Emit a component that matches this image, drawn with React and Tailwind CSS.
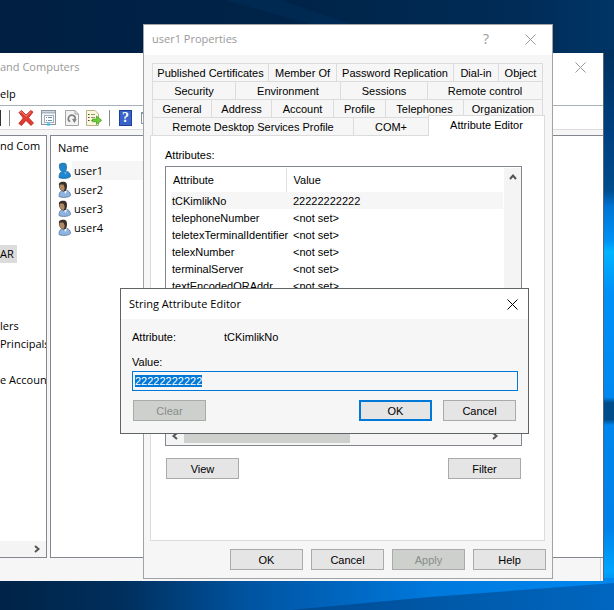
import { useEffect, useRef } from 'react';
import clsx from 'clsx';

const treeRows = ['nd Com', '', '', '', '', '', 'AR', '', '', '', 'lers', 'Principals', '', 'e Accoun'];
const users = ['user1', 'user2', 'user3', 'user4'];

const tabRows = [
  [
    { label: 'Published Certificates', width: 'w-[116px]' },
    { label: 'Member Of', width: 'w-[68px]' },
    { label: 'Password Replication', width: 'w-[117px]' },
    { label: 'Dial-in', width: 'w-[45px]' },
    { label: 'Object', width: 'w-[45px]' },
  ],
  [
    { label: 'Security', width: 'w-[83px]' },
    { label: 'Environment', width: 'w-[105px]' },
    { label: 'Sessions', width: 'w-[87px]' },
    { label: 'Remote control', width: 'w-[116px]' },
  ],
  [
    { label: 'General', width: 'w-[59px]' },
    { label: 'Address', width: 'w-[60px]' },
    { label: 'Account', width: 'w-[62px]' },
    { label: 'Profile', width: 'w-[52px]' },
    { label: 'Telephones', width: 'w-[78px]' },
    { label: 'Organization', width: 'w-[80px]' },
  ],
  [
    { label: 'Remote Desktop Services Profile', width: 'w-[201px]' },
    { label: 'COM+', width: 'w-[75px]' },
    { label: 'Attribute Editor', width: 'w-[117px]', active: true },
  ],
];

const attributes = [
  ['tCKimlikNo', '22222222222'],
  ['telephoneNumber', '<not set>'],
  ['teletexTerminalIdentifier', '<not set>'],
  ['telexNumber', '<not set>'],
  ['terminalServer', '<not set>'],
  ['textEncodedORAddr', '<not set>'],
];

function Wallpaper() {
  return (
    <svg className="absolute inset-0 h-full w-full" viewBox="0 0 614 610" preserveAspectRatio="none" aria-hidden="true">
      <defs>
        <linearGradient id="sky" x1="0" x2="1" y1="0" y2="0">
          <stop offset="0" stopColor="#001f42" />
          <stop offset="0.5" stopColor="#002449" />
          <stop offset="0.85" stopColor="#002c57" />
          <stop offset="1" stopColor="#003566" />
        </linearGradient>
        <linearGradient id="side" x1="0" x2="0" y1="0" y2="1">
          <stop offset="0" stopColor="#00305e" />
          <stop offset="0.15" stopColor="#004080" />
          <stop offset="0.25" stopColor="#004c8c" />
          <stop offset="0.28" stopColor="#0074d4" />
          <stop offset="0.34" stopColor="#0090f4" />
          <stop offset="0.36" stopColor="#00b4ff" />
          <stop offset="0.43" stopColor="#0090f8" />
          <stop offset="0.62" stopColor="#0088f0" />
          <stop offset="0.63" stopColor="#004c8a" />
          <stop offset="0.66" stopColor="#004c8a" />
          <stop offset="0.67" stopColor="#0086ee" />
          <stop offset="0.85" stopColor="#0080e8" />
          <stop offset="0.93" stopColor="#00a4ff" />
          <stop offset="1" stopColor="#0062b8" />
        </linearGradient>
        <linearGradient id="floor" x1="0" x2="1" y1="0" y2="0">
          <stop offset="0" stopColor="#002348" />
          <stop offset="0.2" stopColor="#002f5c" />
          <stop offset="0.4" stopColor="#0053a0" />
          <stop offset="0.7" stopColor="#0078dc" />
          <stop offset="1" stopColor="#0088f0" />
        </linearGradient>
        <linearGradient id="beam" x1="0" x2="1" y1="0" y2="0">
          <stop offset="0" stopColor="#004a92" />
          <stop offset="0.6" stopColor="#005cae" />
          <stop offset="1" stopColor="#0066c0" />
        </linearGradient>
      </defs>
      <rect width="614" height="610" fill="url(#sky)" />
      <path d="M225 0H280L350 24H310Z" fill="#003262" opacity="0.4" />
      <rect x="600" y="50" width="14" height="560" fill="url(#side)" />
      <rect y="578" width="614" height="32" fill="url(#floor)" />
      <path d="M290 610L430 597L614 583V610Z" fill="url(#beam)" />
    </svg>
  );
}

function CloseIcon() {
  return (
    <svg width="11" height="11" viewBox="0 0 11 11" fill="none" stroke="currentColor" aria-hidden="true">
      <path d="M0.5 0.5L10.5 10.5M10.5 0.5L0.5 10.5" />
    </svg>
  );
}

function Chevron({ direction }) {
  return (
    <svg
      className={clsx(direction === 'up' && '-rotate-90', direction === 'left' && 'rotate-180')}
      width="8"
      height="8"
      viewBox="0 0 8 8"
      fill="none"
      stroke="#555"
      strokeWidth="2"
      aria-hidden="true"
    >
      <path d="M2 1L5.5 4L2 7" />
    </svg>
  );
}

function UserIcon({ selected }) {
  return (
    <svg width="13" height="17" viewBox="0 0 13 17" aria-hidden="true">
      <path d="M1 15.5C1 11.5 2.5 9.5 5.5 9.5H8.5C11 9.5 12.5 12 12.5 14.5C11 16.6 3.5 17 1 15.5Z" fill={selected ? '#1f86cf' : '#8fb4e0'} stroke={selected ? '#14659f' : '#52749e'} strokeWidth="0.8" />
      <path d="M5.5 9.5L7.5 13L9 9.5Z" fill={selected ? '#59b0e8' : '#f2f6fb'} />
      <path d="M1 2.5C2 0.6 7 0 8.5 2.2C9.5 4.5 9 8 7.8 9.8C6.5 11.2 4.5 10.5 3.5 9.5C1.5 8.5 0.6 4.8 1 2.5Z" fill={selected ? '#2a7fbd' : '#3a2e28'} />
      <path d="M1.5 4C3 3.4 4.5 3.4 5.6 3.8L6.6 6.5C6.6 8.5 6 10 5 10C2.5 9.5 1.3 7 1.5 4Z" fill={selected ? '#1f86cf' : '#b08a64'} />
    </svg>
  );
}

function DeleteIcon() {
  return (
    <svg width="16" height="16" viewBox="0 0 16 16" aria-hidden="true">
      <path d="M1 2.5L3.5 0.5L8 5L12.8 0.5L15 2L10.5 7.8L15.5 13L13 15.5L8 10.5L3.5 15.5L0.8 13.5L5.3 8Z" fill="#e03c31" stroke="#b71f1a" strokeWidth="0.8" />
      <path d="M2 2.5L3.4 1.7L8 6.3L12.8 1.8" fill="none" stroke="#f58a80" />
    </svg>
  );
}

function PropertiesIcon() {
  return (
    <svg width="15" height="16" viewBox="0 0 15 16" aria-hidden="true">
      <rect x="0.5" y="0.5" width="14" height="14" fill="#f4f6f8" stroke="#8a949e" />
      <path d="M1 2.5H14" stroke="#a9b6c2" strokeWidth="2" />
      <rect x="3.5" y="5.5" width="9" height="7" fill="#fff" stroke="#9fb0c0" />
      <path d="M5 7.5H6M5 10.5H6M7 7.5H11M7 10.5H11" stroke="#6f8ba6" />
      <path d="M6 14.5H9" stroke="#1fb4e8" strokeWidth="2" />
    </svg>
  );
}

function RefreshIcon() {
  return (
    <svg width="14" height="16" viewBox="0 0 14 16" fill="none" aria-hidden="true">
      <path d="M0.5 0.5H10L13.5 4V15.5H0.5Z" fill="#f3f3f3" stroke="#a5a5a5" />
      <path d="M10 0.5V4H13.5" stroke="#a5a5a5" />
      <path d="M5.2 11.6A3.4 3.4 0 1 1 10 9.5" stroke="#808080" strokeWidth="1.6" />
      <path d="M7 8.8L11.8 9.2L9.3 13Z" fill="#808080" />
    </svg>
  );
}

function ExportIcon() {
  return (
    <svg width="16" height="16" viewBox="0 0 16 16" fill="none" aria-hidden="true">
      <path d="M0.5 0.5H9L12.5 4V15.5H0.5Z" fill="#fbf7dc" stroke="#b9b28a" />
      <path d="M2 4.5H3.5M2 7.5H3.5M2 10.5H3.5" stroke="#444" />
      <path d="M5 4.5H9M5 7.5H9M5 10.5H8" stroke="#9a9679" />
      <path d="M6.5 9H10.5V6L15.7 10.3L10.5 14.5V11.7H6.5Z" fill="#6ecb3c" stroke="#3d9b1c" strokeWidth="0.7" />
    </svg>
  );
}

function HelpIcon() {
  return (
    <span className="flex h-4 w-[13px] items-center justify-center border border-[#1d3f96] bg-[#3a62c8] font-['Liberation_Serif',serif] text-sm font-bold text-white">
      ?
    </span>
  );
}

function PushButton({ children, primary, ...props }) {
  return (
    <button
      type="button"
      className={clsx(
        'h-[21px] w-[73px] text-center leading-4',
        primary ? 'border-2 border-[#0078d7]' : 'border border-[#a9abaa]',
        props.disabled ? 'bg-[#cdd0cd] text-[#8a8d8a]' : 'bg-[#e5e5e5]'
      )}
      {...props}
    >
      {children}
    </button>
  );
}

function ConsoleWindow() {
  return (
    <section className="absolute top-[53px] right-[10px] bottom-[29px] left-0 flex flex-col border-r border-[#5b6670] bg-white font-['Open_Sans',sans-serif] text-[11px]">
      <header className="flex h-[31px] shrink-0 items-center justify-between pr-[17px] pb-[2px] text-[#999]">
        <span>and Computers</span>
        <button type="button" aria-label="Close console"><CloseIcon /></button>
      </header>
      <nav className="flex h-[21px] shrink-0 items-center">
        <button type="button">elp</button>
      </nav>
      <div className="flex h-[25px] shrink-0 items-center border-t border-b border-t-[#a8b0b8] border-b-[#dcdcdc]">
        <span className="h-4 w-px bg-[#333]" />
        <span className="ml-2 h-4 w-px bg-[#8c8c8c]" />
        <button type="button" aria-label="Delete" className="ml-2"><DeleteIcon /></button>
        <button type="button" aria-label="Properties" className="ml-[7px]"><PropertiesIcon /></button>
        <button type="button" aria-label="Refresh" className="ml-[9px]"><RefreshIcon /></button>
        <button type="button" aria-label="Export list" className="ml-[7px]"><ExportIcon /></button>
        <span className="ml-[7px] h-4 w-px bg-[#8c8c8c]" />
        <button type="button" aria-label="Help topics" className="ml-[9px]"><HelpIcon /></button>
        <span className="ml-[9px] h-3 w-3 border border-t-2 border-[#8a949e]" />
      </div>
      <div className="flex min-h-0 flex-1 gap-[3px] bg-[#f6f6f6] pt-[5px]">
        <div className="flex w-[47px] shrink-0 flex-col border border-l-0 border-[#828790] bg-white">
          <ul className="flex-1 overflow-hidden pt-px">
            {treeRows.map((label, i) => (
              <li key={i} className="flex h-[18px] items-center whitespace-nowrap">
                <span className={clsx(label === 'AR' && 'bg-[#dcdcdc] pr-[3px] leading-[18px]')}>{label}</span>
              </li>
            ))}
          </ul>
          <div className="flex h-4 items-center justify-end bg-[#f4f4f4] pr-[5px]">
            <Chevron direction="right" />
          </div>
        </div>
        <div className="min-w-0 flex-1 border border-r-0 border-[#828790] bg-white">
          <div className="flex h-[25px] items-center pl-[7px]">Name</div>
          <ul>
            {users.map((name, i) => (
              <li key={name} className="flex h-[19px] items-center pl-[7px]">
                <UserIcon selected={i === 0} />
                <span className={clsx('ml-px w-[100px] pl-[2px] leading-[19px]', i === 0 && 'bg-[#f6f6f6]')}>{name}</span>
              </li>
            ))}
          </ul>
        </div>
      </div>
      <footer className="flex h-[23px] shrink-0 justify-end bg-[#f6f6f6] pr-[2px]">
        <span className="w-px bg-[#d5d5d5]" />
      </footer>
    </section>
  );
}

function AttributeList() {
  return (
    <div className="mt-[3px] flex h-[280px] flex-col border border-[#828790] bg-white">
      <div className="flex min-h-0 flex-1 pt-px">
        <div className="flex-1 overflow-hidden pl-[5px]">
          <table aria-labelledby="attributes-label" className="w-full table-fixed border-collapse text-left whitespace-nowrap">
            <thead>
              <tr className="h-6">
                <th className="w-[115px] border-r border-[#e2e2e2] pl-[2px] font-normal">Attribute</th>
                <th className="pl-[7px] font-normal">Value</th>
              </tr>
            </thead>
            <tbody>
              {attributes.map(([name, value], i) => (
                <tr key={name} className={clsx('h-[17px]', i === 0 && 'bg-[#f6f6f6]')}>
                  <td className="p-0 pl-px leading-4">{name}</td>
                  <td className="p-0 pl-[7px] leading-4">{value}</td>
                </tr>
              ))}
            </tbody>
          </table>
        </div>
        <div className="ml-px flex w-[17px] justify-center bg-[#f4f4f4] pt-[5px]">
          <Chevron direction="up" />
        </div>
      </div>
      <div className="flex h-[17px] items-center bg-[#f4f4f4] pr-[22px] pb-[2px] pl-[5px]">
        <Chevron direction="left" />
        <span className="ml-[5px] h-full w-[166px] bg-[#cdd0cd]" />
        <span className="ml-auto"><Chevron direction="right" /></span>
      </div>
    </div>
  );
}

function PropertiesWindow() {
  return (
    <section className="absolute top-6 left-[143px] w-[410px] border border-[#a0a4a6] bg-[#f6f6f6] font-['Liberation_Sans',sans-serif] text-[11px]">
      <header className="flex h-[30px] items-center bg-white pr-4 pb-[2px] pl-2 font-['Open_Sans',sans-serif] text-[#999]">
        <span>user1 Properties</span>
        <button type="button" aria-label="Context help" className="ml-auto text-sm">?</button>
        <button type="button" aria-label="Close properties" className="ml-9"><CloseIcon /></button>
      </header>
      <div className="pt-2 pr-[7px] pb-2 pl-[6px]">
        <div role="tablist" className="pl-[2px]">
          {tabRows.map((row) => (
            <div key={row[0].label} className="flex h-[18px] items-end">
              {row.map((tab) => (
                <button
                  key={tab.label}
                  type="button"
                  role="tab"
                  aria-selected={Boolean(tab.active)}
                  className={clsx(
                    'shrink-0 border-t border-l border-[#dcdcdc] text-center leading-4 whitespace-nowrap last:border-r',
                    tab.width,
                    tab.active ? 'relative z-10 -mb-px h-[21px] bg-white pb-[2px]' : 'h-[18px] bg-[#f6f6f6] pt-px'
                  )}
                >
                  {tab.label}
                </button>
              ))}
            </div>
          ))}
        </div>
        <div role="tabpanel" className="h-[406px] border border-[#dcdcdc] bg-white pt-[11px] pr-[22px] pl-[14px]">
          <div id="attributes-label" className="leading-4">Attributes:</div>
          <AttributeList />
          <div className="mt-3 flex justify-between px-px">
            <PushButton>View</PushButton>
            <PushButton>Filter</PushButton>
          </div>
        </div>
        <div className="mt-2 -mr-px flex justify-end gap-2">
          <PushButton>OK</PushButton>
          <PushButton>Cancel</PushButton>
          <PushButton disabled>Apply</PushButton>
          <PushButton>Help</PushButton>
        </div>
      </div>
    </section>
  );
}

function StringEditorDialog() {
  const inputRef = useRef(null);

  // start with the whole value selected so typing replaces it
  useEffect(() => {
    inputRef.current.focus();
    inputRef.current.select();
  }, []);

  return (
    <section className="absolute top-[288px] left-[120px] w-[409px] border border-[#5f6466] bg-[#f6f6f6] font-['Liberation_Sans',sans-serif] text-[11px]">
      <header className="flex h-[30px] items-center justify-between bg-white pr-[10px] pl-2 font-['Open_Sans',sans-serif]">
        <span>String Attribute Editor</span>
        <button type="button" aria-label="Close editor"><CloseIcon /></button>
      </header>
      <form className="pt-[10px] pr-[10px] pb-3 pl-[11px]">
        <div className="flex leading-4">
          <span className="w-[92px]">Attribute:</span>
          <span>tCKimlikNo</span>
        </div>
        <label htmlFor="value" className="mt-[9px] block leading-4">Value:</label>
        <input
          id="value"
          ref={inputRef}
          defaultValue="22222222222"
          className="mt-px block h-5 w-full border border-[#0078d7] bg-[#f6f6f6] px-[2px] pb-px outline-none selection:bg-[#0078d7] selection:text-white"
        />
        <div className="mt-[9px] flex items-center pr-[2px] pl-px">
          <PushButton disabled>Clear</PushButton>
          <span className="flex-1" />
          <PushButton primary>OK</PushButton>
          <span className="w-[11px]" />
          <PushButton>Cancel</PushButton>
        </div>
      </form>
    </section>
  );
}

export default function App() {
  return (
    <main className="relative min-h-screen overflow-hidden bg-[#001f42] text-black">
      <Wallpaper />
      <ConsoleWindow />
      <PropertiesWindow />
      <StringEditorDialog />
    </main>
  );
}
